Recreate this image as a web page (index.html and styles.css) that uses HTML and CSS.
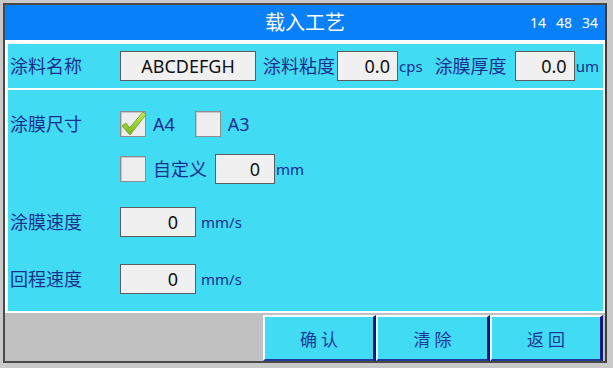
FILE: index.html
```html
<!DOCTYPE html>
<html>
<head>
  <title>载入工艺</title>
  <link rel="stylesheet" href="styles.css">
</head>
<body>

  <div class="frame">

    <div class="header">
      <span></span>
      <span class="title">载入工艺</span>
      <span class="clock"><span>14</span><span>48</span><span>34</span></span>
    </div>

    <div class="panel top-panel">
      <span class="label">涂料名称</span>
      <span class="field name-field">ABCDEFGH</span>
      <span class="label-inline first">涂料粘度</span>
      <span class="field small-field visc">0.0</span>
      <span class="unit">cps</span>
      <span class="label-inline second">涂膜厚度</span>
      <span class="field small-field thick">0.0</span>
      <span class="unit">um</span>
    </div>

    <div class="panel main-panel">
      <div class="row row-size">
        <span class="label">涂膜尺寸</span>
        <span class="check">
          <svg viewBox="0 0 26 26" width="26" height="26">
            <defs>
              <linearGradient id="tick" x1="0" y1="0" x2="0" y2="1">
                <stop offset="0" stop-color="#c4ec52"/>
                <stop offset="1" stop-color="#78b61e"/>
              </linearGradient>
            </defs>
            <polygon points="2,15 6,12 9.5,17 23,1 26,3.5 10,24" fill="url(#tick)" stroke="#5f9c1a" stroke-width="0.8" stroke-linejoin="round"/>
          </svg>
        </span>
        <span class="opt">A4</span>
        <span class="check gap"></span>
        <span class="opt">A3</span>
      </div>

      <div class="row row-custom">
        <span class="label"></span>
        <span class="check"></span>
        <span class="opt">自定义</span>
        <span class="field custom-field">0</span>
        <span class="unit">mm</span>
      </div>

      <div class="row row-speed">
        <span class="label">涂膜速度</span>
        <span class="field speed-field">0</span>
        <span class="unit speed-unit">mm/s</span>
      </div>

      <div class="row row-return">
        <span class="label">回程速度</span>
        <span class="field speed-field">0</span>
        <span class="unit speed-unit">mm/s</span>
      </div>
    </div>

    <div class="footer">
      <button class="btn narrow">确 认</button>
      <button class="btn">清 除</button>
      <button class="btn narrow">返 回</button>
    </div>

  </div>

</body>
</html>
```

FILE: styles.css
```css
body {
  margin: 0;
  background: #c9c9c9;
  font-family: 'Noto Sans', 'Noto Sans CJK SC', sans-serif;
  color: #1b2f8e;
}

.frame {
  margin: 3px 0 0 3px;
  width: 600px;
  height: 356px;
  border: 2px solid #4a4a4a;
  border-right-color: #3c3c3c;
  background: #fff;
  display: flex;
  flex-direction: column;
}

.header {
  height: 35px;
  background: #0780fa;
  color: #fff;
  display: grid;
  grid-template-columns: 1fr auto 1fr;
  align-items: center;
}

.title {
  font-size: 20px;
  line-height: 1;
  padding-top: 1px;
}

.clock {
  justify-self: end;
  display: flex;
  gap: 10px;
  padding-right: 7px;
  font-size: 14px;
}

.panel {
  background: #42dbf4;
  margin: 0 2px 0 3px;
}

.top-panel {
  margin-top: 4px;
  height: 44px;
  display: flex;
  align-items: center;
  padding-left: 2px;
}

.main-panel {
  margin-top: 2px;
  height: 201px;
  padding: 20px 0 0 2px;
}

.label {
  width: 110px;
  font-size: 18px;
  line-height: 1;
}

.label-inline {
  font-size: 18px;
  line-height: 1;
  margin-right: 2px;
}

.label-inline.first {
  margin-left: 7px;
}

.label-inline.second {
  margin-left: 12px;
  margin-right: 8px;
}

.field {
  box-sizing: border-box;
  height: 30px;
  background: #f0f0f0;
  border: 1px solid #5c5c5c;
  color: #111;
  font-size: 18px;
  display: flex;
  align-items: center;
  justify-content: flex-end;
}

.name-field {
  width: 136px;
  justify-content: center;
}

.small-field {
  width: 61px;
  padding-right: 7px;
}

.thick {
  width: 60px;
}

.custom-field {
  width: 60px;
  padding-right: 14px;
  margin-left: 8px;
}

.speed-field {
  width: 76px;
  padding-right: 17px;
}

.unit {
  font-size: 15px;
  margin-left: 1px;
}

.speed-unit {
  margin-left: 5px;
}

.row {
  display: flex;
  align-items: center;
}

.row-size {
  height: 27px;
}

.row-custom {
  height: 30px;
  margin-top: 17px;
}

.row-speed {
  height: 30px;
  margin-top: 23px;
}

.row-return {
  height: 30px;
  margin-top: 27px;
}

.check {
  box-sizing: border-box;
  width: 26px;
  height: 26px;
  background: #eeeeee;
  border: 1px solid #8d8d8d;
  box-shadow: inset 1px 1px 0 #c8c8c8;
}

.check svg {
  display: block;
  margin: -1px 0 0 -1px;
  overflow: visible;
}

.check.gap {
  margin-left: 20px;
}

.opt {
  font-size: 18px;
  line-height: 1;
  margin-left: 7px;
}

.footer {
  margin-top: 2px;
  height: 48px;
  background: #c0c0c0;
  display: flex;
  justify-content: flex-end;
  padding: 2px 2px 0 0;
  box-sizing: border-box;
}

.btn {
  width: 114px;
  height: 46px;
  box-sizing: border-box;
  background: #42dbf4;
  border: 0;
  border-left: 2px solid #f4fbfd;
  border-top: 2px solid #f4fbfd;
  border-right: 3px solid #0b1a7e;
  border-bottom: 2px solid #1c3a96;
  color: #1b3a9a;
  font-family: 'Noto Sans CJK SC', sans-serif;
  font-size: 17px;
  padding: 0;
}

.btn.narrow {
  width: 113px;
}
```
